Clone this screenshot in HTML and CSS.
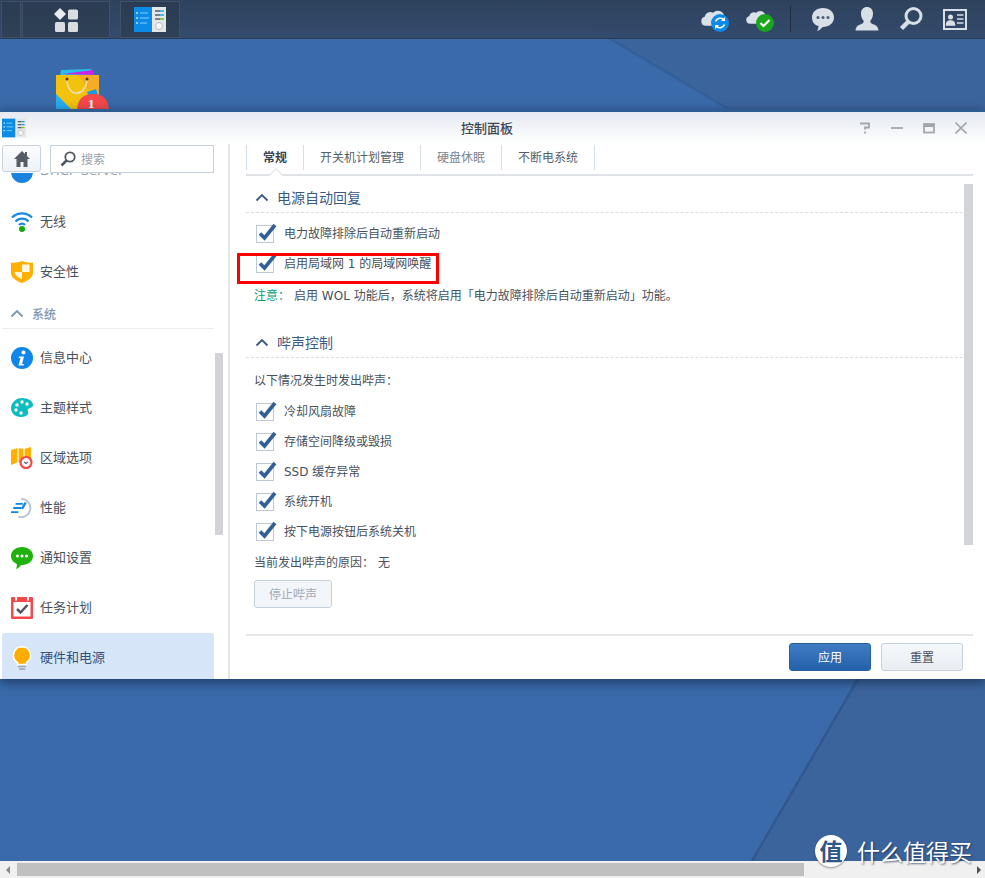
FILE: index.html
```html
<!DOCTYPE html>
<html lang="zh-CN">
<head>
    <meta charset="UTF-8">
    <title>控制面板</title>
    <link rel="stylesheet" href="styles.css">
</head>
<body>
    <svg width="0" height="0" class="defs">
        <symbol id="cp" viewBox="0 0 32 25">
            <rect width="18" height="25" fill="#0b8be6"/>
            <rect x="18" width="14" height="25" fill="#e4e6e8"/>
            <path d="M6 6h8M6 11h9M6 16h7" stroke="#7fd0ff" stroke-width="1.2"/>
            <path d="M2 6h2M2 11h2M2 16h2" stroke="#bfe6ff" stroke-width="1.4"/>
            <path d="M21 4h5M21 8h5M21 12h5" stroke="#555d66" stroke-width="1.5"/>
            <path d="M26 4h4M26 8h4" stroke="#16a5e8" stroke-width="1.5"/>
            <path d="M26 12h4" stroke="#6cbd1a" stroke-width="1.5"/>
            <circle cx="25" cy="19" r="3.5" fill="#f6f8fa" stroke="#b5bcc4"/>
        </symbol>
        <symbol id="chk" viewBox="0 0 22 22">
            <rect x="1.5" y="3.5" width="17" height="17" fill="#fff" stroke="#bcc8d8"/>
            <path d="M5 11.500l4.500 4.500L20 3" fill="none" stroke="#315f98" stroke-width="3.600"/>
        </symbol>
        <symbol id="up" viewBox="0 0 14 9">
            <path d="M1.500 7.500L7 2l5.500 5.500" fill="none" stroke="currentColor" stroke-width="1.800"/>
        </symbol>
        <symbol id="cloud" viewBox="0 0 28 20">
            <path d="M5 20a5 5 0 0 1-1-9.800A6 6 0 0 1 13 6a7 7 0 0 1 12 3.500A5.500 5.500 0 0 1 23 20z" fill="#dbe1e8"/>
        </symbol>
    </svg>

    <svg class="wallpaper" viewBox="0 0 985 861" width="985" height="861">
        <rect width="985" height="861" fill="#3c649c"/>
        <path d="M0 0H545L735 112 860 679 752 861H0z" fill="#3a6aaa"/>
        <path d="M545 0L735 113" stroke="#33609a" stroke-width="2.500" fill="none"/>
        <path d="M858 679L752 861" stroke="#31588e" stroke-width="2.500" fill="none"/>
    </svg>

    <header class="taskbar">
        <div class="task-btn task-stub"></div>
        <div class="task-btn task-apps">
            <svg width="24" height="24" viewBox="0 0 24 24">
                <path d="M6 0l6 6-6 6-6-6z" fill="#e9ebee"/>
                <rect x="14" y="1.500" width="10" height="10" rx="1.500" fill="#d9dde2"/>
                <rect x="1" y="14" width="10" height="10" rx="1.500" fill="#d9dde2"/>
                <rect x="14" y="14" width="10" height="10" rx="1.500" fill="#d9dde2"/>
            </svg>
        </div>
        <div class="task-btn task-cp">
            <svg width="32" height="25"><use href="#cp"/></svg>
        </div>
        <div class="tray">
            <svg class="tray-cloud" width="28" height="26" viewBox="0 0 28 26">
                <use href="#cloud" width="26" height="21" y="0"/>
                <circle cx="19" cy="17" r="9" fill="#0f8ae8"/>
                <path d="M14.500 15.500a5 5 0 0 1 8.500-1.500M23.500 18.500a5 5 0 0 1-8.500 1.500" fill="none" stroke="#fff" stroke-width="1.600"/>
                <path d="M24 11v4h-4zM14 23v-4h4z" fill="#fff"/>
            </svg>
            <svg class="tray-cloud tray-ok" width="28" height="26" viewBox="0 0 28 26">
                <use href="#cloud" width="22" height="18" y="1"/>
                <circle cx="19" cy="17" r="9" fill="#19a51e"/>
                <path d="M14.500 17l3 3 6-6" fill="none" stroke="#fff" stroke-width="2.200"/>
            </svg>
            <div class="tray-sep"></div>
            <svg width="24" height="24" viewBox="0 0 24 24">
                <path d="M12 1c6.500 0 11 4 11 9.500S18 20 12 20l-1 .500c-1 1.500-3 3-5 3.500 1-1.500 1.500-3 1.500-5C3.500 18 1 15 1 10.500 1 5 5.500 1 12 1z" fill="#d9dfe6"/>
                <circle cx="7" cy="10.500" r="1.500" fill="#4a5d75"/><circle cx="12" cy="10.500" r="1.500" fill="#4a5d75"/><circle cx="17" cy="10.500" r="1.500" fill="#4a5d75"/>
            </svg>
            <svg width="24" height="24" viewBox="0 0 24 24">
                <path d="M12 0c3.500 0 6 2.500 6 6.500 0 3-1 5.500-2.500 7-.5 1.500 0 2.500 2 3.500 3 1 5.500 2 6 6.500H.5c.5-4.500 3-5.500 6-6.500 2-1 2.500-2 2-3.500C7 12 6 9.500 6 6.500 6 2.500 8.500 0 12 0z" fill="#d9dfe6"/>
            </svg>
            <svg width="24" height="24" viewBox="0 0 24 24">
                <circle cx="14.500" cy="9" r="7.500" fill="none" stroke="#d9dfe6" stroke-width="3"/>
                <path d="M9 15l-6.500 6.500" stroke="#d9dfe6" stroke-width="4.500"/>
            </svg>
            <svg width="24" height="21" viewBox="0 0 24 21">
                <rect x="1" y="1" width="22" height="19" fill="none" stroke="#d9dfe6" stroke-width="2"/>
                <circle cx="7.500" cy="8" r="2.500" fill="#d9dfe6"/>
                <path d="M3.500 16c0-3 1.500-4 4-4s4 1 4 4zM14 6h6.500M14 10h6.500M14 14h6.500" fill="#d9dfe6" stroke="#d9dfe6" stroke-width="1.500"/>
            </svg>
        </div>
    </header>

    <main class="desktop">
        <svg class="desk-icon" width="54" height="44" viewBox="0 0 54 44">
            <path d="M5 2l30-1 3 8H4z" fill="#29bfe8"/>
            <path d="M7 6l30-4 1 5z" fill="#c923e6"/>
            <rect y="7" width="43" height="37" fill="#f3c20c"/>
            <path d="M22 7h21v30z" fill="#f7ac25"/>
            <path d="M0 26l18 18H0z" fill="#27aef0"/>
            <path d="M11 11c0 19 19 19 20 0" fill="none" stroke="#eedba0" stroke-width="1.800"/>
            <circle cx="11" cy="11" r="1.500" fill="#5a3a10"/><circle cx="31" cy="11" r="1.500" fill="#5a3a10"/>
            <path d="M31 24l9-3 3 9-8 3z" fill="#1d9be6"/>
            <path d="M21 44c0-12 5-18 16-18s16 6 16 18z" fill="#f4484a"/>
        </svg>
        <span class="desk-badge">1</span>

        <section class="window">
            <div class="titlebar">
                <svg class="title-icon" width="24" height="20"><use href="#cp"/></svg>
                <span class="title-text">控制面板</span>
                <div class="title-btns">
                    <svg width="12" height="12" viewBox="0 0 12 12"><path d="M1 1.500h9v4H6v2M6 9.500v2" fill="none" stroke="#a2a7ae" stroke-width="1.800"/></svg>
                    <svg width="12" height="12" viewBox="0 0 12 12"><path d="M0 6h12" stroke="#a2a7ae" stroke-width="1.800"/></svg>
                    <svg width="12" height="12" viewBox="0 0 12 12"><rect x="1" y="2" width="10" height="8.500" fill="none" stroke="#a2a7ae" stroke-width="1.800"/><path d="M1 3.500h10" stroke="#a2a7ae" stroke-width="3"/></svg>
                    <svg width="12" height="12" viewBox="0 0 12 12"><path d="M.5 .5l11 11M11.500 .5l-11 11" stroke="#a2a7ae" stroke-width="1.600"/></svg>
                </div>
            </div>
            <div class="win-body">
                <aside class="sidebar">
                    <div class="side-head">
                        <button class="home-btn">
                            <svg width="16" height="16" viewBox="0 0 16 16">
                                <path d="M8 0L0 8h2.500v8h4v-5h3v5h4V8H16l-3-3V1h-2v2z" fill="#545c66"/>
                            </svg>
                        </button>
                        <div class="search">
                            <svg width="16" height="16" viewBox="0 0 16 16">
                                <circle cx="10" cy="6" r="4.700" fill="none" stroke="#505862" stroke-width="1.800"/>
                                <path d="M6.500 9.500L1.500 14.500" stroke="#505862" stroke-width="2.600"/>
                            </svg>
                            <span>搜索</span>
                        </div>
                    </div>
                    <div class="side-scroll">
                        <div class="side-list">
                            <div class="side-item item-dim">
                                <svg width="22" height="22" viewBox="0 0 22 22"><circle cx="11" cy="11" r="11" fill="#1b82e0"/></svg>
                                <span>DHCP Server</span>
                            </div>
                            <div class="side-item">
                                <svg width="22" height="22" viewBox="0 0 22 22">
                                    <path d="M1 6.500a14 14 0 0 1 20 0M4.500 10.500a9 9 0 0 1 13 0M8 14a4 4 0 0 1 6 0" fill="none" stroke="#1688e6" stroke-width="2.200"/>
                                    <circle cx="11" cy="18" r="3" fill="#17a80f"/>
                                </svg>
                                <span>无线</span>
                            </div>
                            <div class="side-item">
                                <svg width="22" height="22" viewBox="0 0 22 22">
                                    <path d="M0 1.500C4 2 7 1.500 11 0c4 1.500 7 2 11 1.500V12c0 4-5 8-11 10C5 20 0 16 0 12z" fill="#ffb000"/>
                                    <path d="M11 3.500h7.500V11H11zM11 11v7C8 17 4 14.500 3.500 11z" fill="#fdf6e0"/>
                                </svg>
                                <span>安全性</span>
                            </div>
                            <div class="side-group">
                                <svg width="14" height="9"><use href="#up"/></svg>
                                <span>系统</span>
                            </div>
                            <div class="side-item">
                                <svg width="22" height="22" viewBox="0 0 22 22">
                                    <circle cx="11" cy="11" r="11" fill="#0f86e8"/>
                                    <circle cx="12.500" cy="5.500" r="2" fill="#fff"/>
                                    <path d="M8 9.500h5l-2 7.500h2l-.5 1.500H7.500l2-7.500H7.700z" fill="#fff"/>
                                </svg>
                                <span>信息中心</span>
                            </div>
                            <div class="side-item">
                                <svg width="22" height="22" viewBox="0 0 22 22">
                                    <path d="M11 1c6 0 11 3 11 7 0 3-4 3-5 4s1 3 0 5-4 3-7 3C4 20 0 16 0 11S5 1 11 1z" fill="#0bbcc0"/>
                                    <circle cx="6" cy="8" r="1.700" fill="#fff"/><circle cx="11" cy="5" r="1.700" fill="#fff"/><circle cx="5" cy="13" r="1.700" fill="#fff"/><circle cx="16" cy="7" r="1.700" fill="#fff"/><circle cx="10" cy="16" r="1.700" fill="#fff"/>
                                </svg>
                                <span>主题样式</span>
                            </div>
                            <div class="side-item">
                                <svg width="22" height="22" viewBox="0 0 22 22">
                                    <path d="M0 3l7-2 6 1 7-2v14l-7 3-6-2-7 3z" fill="#ffb000"/>
                                    <path d="M7 1v17M13 2v14" stroke="#fff" stroke-width="1.200"/>
                                    <circle cx="15" cy="15.500" r="5.500" fill="#fff" stroke="#f4484a" stroke-width="2.200"/>
                                    <path d="M13 15l2 1.500 2-1.500" fill="none" stroke="#5c6670" stroke-width="1.200"/>
                                </svg>
                                <span>区域选项</span>
                            </div>
                            <div class="side-item">
                                <svg width="24" height="22" viewBox="0 0 24 22">
                                    <path d="M11 1a10 10 0 1 1-3 19.500" fill="none" stroke="#b7c2ce" stroke-width="2"/>
                                    <path d="M5 6.500h8M2.500 11h9M0 15.500h8" stroke="#0f86e8" stroke-width="2"/>
                                    <path d="M12 12l4-7" stroke="#0f86e8" stroke-width="2.400"/>
                                </svg>
                                <span>性能</span>
                            </div>
                            <div class="side-item">
                                <svg width="22" height="22" viewBox="0 0 22 22">
                                    <path d="M11 0c6 0 11 3.500 11 9s-5 9-11 9h-1c-1.500 2-3 3.500-5 4 .7-1.500 1-3 .8-5C2 15.500 0 12.500 0 9 0 3.500 5 0 11 0z" fill="#1fb10c"/>
                                    <circle cx="6.500" cy="9" r="1.500" fill="#fff"/><circle cx="11" cy="9" r="1.500" fill="#fff"/><circle cx="15.500" cy="9" r="1.500" fill="#fff"/>
                                </svg>
                                <span>通知设置</span>
                            </div>
                            <div class="side-item">
                                <svg width="22" height="22" viewBox="0 0 22 22">
                                    <rect width="22" height="22" y="0" rx="1" fill="#f4484a"/>
                                    <rect x="2.500" y="5" width="17" height="14.500" fill="#fff"/>
                                    <path d="M4 0h2v3.500H4zM16 0h2v3.500h-2z" fill="#fff"/>
                                    <path d="M6 12l3.500 3.500L16.500 8" fill="none" stroke="#4f5660" stroke-width="2.500"/>
                                </svg>
                                <span>任务计划</span>
                            </div>
                            <div class="side-item is-active">
                                <svg width="22" height="24" viewBox="0 0 22 24">
                                    <path d="M11 .8a8.500 8.500 0 0 1 4.500 15.700V18.500h-9v-2A8.500 8.500 0 0 1 11 .8z" fill="#ffac00" stroke="#fff" stroke-width="1.500"/>
                                    <path d="M7 20.500h8M8 23h6" stroke="#9aa3ad" stroke-width="1.500"/>
                                </svg>
                                <span>硬件和电源</span>
                            </div>
                        </div>
                        <div class="side-bar"></div>
                    </div>
                </aside>

                <div class="content">
                    <nav class="tabs">
                        <a class="tab is-on">常规</a>
                        <a class="tab">开关机计划管理</a>
                        <a class="tab tab-dim">硬盘休眠</a>
                        <a class="tab">不断电系统</a>
                    </nav>
                    <div class="panel">
                        <div class="panel-bar"></div>
                        <h2 class="sec-head">
                            <svg width="14" height="9"><use href="#up"/></svg>
                            <span>电源自动回复</span>
                        </h2>
                        <div class="sec-first">
                            <label class="check-row">
                                <svg width="22" height="22"><use href="#chk"/></svg>
                                <span>电力故障排除后自动重新启动</span>
                            </label>
                            <label class="check-row">
                                <svg width="22" height="22"><use href="#chk"/></svg>
                                <span>启用局域网 1 的局域网唤醒</span>
                                <div class="mark-box"></div>
                            </label>
                        </div>
                        <p class="note line"><em>注意：</em>启用 WOL 功能后，系统将启用「电力故障排除后自动重新启动」功能。</p>

                        <h2 class="sec-head sec-two">
                            <svg width="14" height="9"><use href="#up"/></svg>
                            <span>哔声控制</span>
                        </h2>
                        <p class="line intro">以下情况发生时发出哔声：</p>
                        <div class="sec-checks">
                            <label class="check-row"><svg width="22" height="22"><use href="#chk"/></svg><span>冷却风扇故障</span></label>
                            <label class="check-row"><svg width="22" height="22"><use href="#chk"/></svg><span>存储空间降级或毁损</span></label>
                            <label class="check-row"><svg width="22" height="22"><use href="#chk"/></svg><span>SSD 缓存异常</span></label>
                            <label class="check-row"><svg width="22" height="22"><use href="#chk"/></svg><span>系统开机</span></label>
                            <label class="check-row"><svg width="22" height="22"><use href="#chk"/></svg><span>按下电源按钮后系统关机</span></label>
                        </div>
                        <p class="line reason">当前发出哔声的原因：<span>无</span></p>
                        <button class="btn btn-off">停止哔声</button>
                    </div>
                    <footer class="actions">
                        <button class="btn btn-main">应用</button>
                        <button class="btn btn-plain">重置</button>
                    </footer>
                </div>
            </div>
        </section>

        <div class="watermark">
            <span class="wm-logo">值</span>
            <span class="wm-text">什么值得买</span>
        </div>
    </main>

    <div class="hscroll">
        <span class="arrow arrow-l"></span>
        <div class="hthumb"></div>
        <span class="arrow arrow-r"></span>
    </div>
</body>
</html>
```

FILE: styles.css
```css
* {
    box-sizing: border-box;
}
html, body {
    margin: 0;
    height: 100%;
    overflow: hidden;
}
body {
    position: relative;
    display: flex;
    flex-direction: column;
    font-family: "DejaVu Sans", "Noto Sans CJK SC", sans-serif;
    font-size: 12px;
    color: #47515c;
    background: #f0f0f0;
}
svg {
    display: block;
    flex: none;
}
.defs {
    position: absolute;
}
.wallpaper {
    position: absolute;
    left: 0;
    top: 0;
}

/* top bar */
.taskbar {
    position: relative;
    display: flex;
    height: 39px;
    padding: 1px 0 1px 1px;
    background: linear-gradient(#2d4058f0, #33496af0);
    border-bottom: 1px solid #283b54;
}
.task-btn {
    display: flex;
    align-items: center;
    justify-content: center;
    height: 37px;
    background: linear-gradient(#2b3c52, #2e4157);
    border: 1px solid #3f5167;
}
.task-stub {
    width: 20px;
    margin-right: 1px;
}
.task-apps {
    width: 88px;
    margin-right: 10px;
}
.task-cp {
    width: 60px;
}
.tray {
    display: flex;
    align-items: center;
    gap: 20px;
    margin-left: auto;
    padding-right: 18px;
}
.tray-cloud {
    margin-right: -3px;
}
.tray-ok {
    margin-right: -4px;
}
.tray-sep {
    width: 1px;
    height: 26px;
    background: #1f2e42;
}

/* desktop */
.desktop {
    position: relative;
    flex: 1;
}
.desk-icon {
    position: absolute;
    left: 56px;
    top: 29px;
}
.desk-badge {
    position: absolute;
    left: 88px;
    top: 57px;
    font: bold 13px "Liberation Serif", serif;
    color: #fff;
}
.window {
    position: absolute;
    left: 0;
    right: 0;
    top: 70px;
    height: 570px;
    display: flex;
    flex-direction: column;
    background: #fff;
    border-top: 3px solid #2e5d94;
    box-shadow: 0 3px 10px rgba(10, 25, 50, 0.6);
}
.titlebar {
    position: relative;
    display: flex;
    align-items: center;
    justify-content: center;
    flex: none;
    height: 32px;
    padding: 0 11px 2px 0;
    background: linear-gradient(#e5e9f1, #fff);
}
.title-icon {
    position: absolute;
    left: 2px;
    top: 6px;
}
.title-text {
    font-size: 13px;
    font-weight: 500;
    color: #3c4754;
}
.title-btns {
    position: absolute;
    right: 18px;
    top: 10px;
    display: flex;
    gap: 20px;
}
.win-body {
    flex: 1;
    display: flex;
    min-height: 0;
}

/* left list */
.sidebar {
    flex: none;
    width: 230px;
    display: flex;
    flex-direction: column;
    border-right: 2px solid #e6e7e9;
}
.side-head {
    position: relative;
    display: flex;
    flex: none;
    gap: 9px;
    height: 28px;
    margin-top: 1px;
    padding-left: 2px;
    background: #fff;
    z-index: 1;
}
.home-btn {
    display: flex;
    align-items: center;
    justify-content: center;
    width: 39px;
    height: 27px;
    padding: 0;
    background: linear-gradient(#fbfcfd, #eef2f7);
    border: 1px solid #c8d2df;
    border-radius: 3px;
}
.search {
    display: flex;
    align-items: center;
    gap: 5px;
    width: 164px;
    height: 28px;
    padding-left: 9px;
    background: #fff;
    border: 1px solid #c5d0de;
    color: #9aa3ad;
}
.search span {
    margin-bottom: 2px;
}
.side-scroll {
    position: relative;
    flex: 1;
    overflow: hidden;
}
.side-list {
    width: 212px;
    margin: -26px 0 0 2px;
}
.side-item {
    display: flex;
    align-items: center;
    height: 50px;
    padding-left: 9px;
    font-size: 13px;
    border-radius: 3px;
}
.side-item svg {
    margin-right: 7px;
    width: 22px;
}
.side-item span {
    margin-bottom: 3px;
}
.item-dim {
    color: #9aa3ad;
}
.is-active {
    background: #d6e6f8;
    color: #33517e;
}
.side-group {
    display: flex;
    align-items: center;
    gap: 8px;
    height: 32px;
    margin-bottom: 4px;
    padding: 2px 0 0 8px;
    font-weight: 500;
    color: #7c96b4;
    border-bottom: 1px solid #ecedef;
}
.side-bar {
    position: absolute;
    left: 215px;
    top: 180px;
    width: 8px;
    height: 182px;
    background: #d3d4d7;
}

/* right side */
.content {
    flex: 1;
    display: flex;
    flex-direction: column;
    min-width: 0;
    padding: 0 12px 0 16px;
}
.tabs {
    position: relative;
    display: flex;
    flex: none;
    height: 32px;
    border-bottom: 2px solid #dfe2e6;
}
.tab {
    display: flex;
    align-items: center;
    height: 23px;
    margin-top: 1px;
    padding: 0 16px 2px;
    color: #555f6a;
    border-right: 1px solid #d5deea;
    box-sizing: content-box;
}
.tabs .tab:first-child {
    border-left: 1px solid #d5deea;
}
.tab-dim {
    color: #7b8590;
}
.is-on {
    position: relative;
    font-weight: 700;
    color: #3a4552;
}
.is-on::after {
    content: "";
    position: absolute;
    left: 24px;
    top: 25px;
    width: 9px;
    height: 9px;
    background: #fff;
    border-left: 1px solid #dfe2e6;
    border-top: 1px solid #dfe2e6;
    transform: rotate(45deg);
}
.panel {
    position: relative;
    flex: 1;
    padding-top: 9px;
}
.panel-bar {
    position: absolute;
    right: 0;
    top: 8px;
    width: 9px;
    height: 361px;
    background: #d3d4d7;
}
.sec-head {
    display: flex;
    align-items: center;
    gap: 8px;
    height: 28px;
    margin: 0;
    padding: 0 0 2px 9px;
    font-size: 14px;
    font-weight: 400;
    color: #3a5a85;
    border-bottom: 1px dashed #d8dfe8;
}
.sec-head span {
    margin-bottom: 2px;
}
.sec-two {
    margin-top: 23px;
}
.sec-first {
    margin-top: 5px;
}
.sec-checks {
    margin-top: 4px;
}
.check-row {
    position: relative;
    display: flex;
    align-items: center;
    gap: 7px;
    height: 30px;
    padding-left: 9px;
}
.check-row span {
    margin-bottom: 1px;
}
.mark-box {
    position: absolute;
    left: -9px;
    top: 5px;
    width: 202px;
    height: 31px;
    border: 3px solid #f00;
}
.line {
    height: 24px;
    margin: 0;
    padding-left: 8px;
    line-height: 26px;
}
.note {
    margin-top: 5px;
}
.note em {
    font-style: normal;
    color: #0a9c70;
    margin-right: 4px;
}
.intro {
    margin-top: 10px;
}
.reason {
    margin-top: 4px;
}
.reason span {
    margin-left: 4px;
}
.btn {
    font: inherit;
    height: 28px;
    padding-bottom: 3px;
    border-radius: 3px;
    border: 1px solid #c6d1de;
}
.btn-off {
    display: block;
    width: 78px;
    margin: 6px 0 0 8px;
    background: #f2f5fa;
    color: #a3abb5;
}
.actions {
    display: flex;
    flex: none;
    justify-content: flex-end;
    gap: 10px;
    height: 45px;
    padding: 7px 10px 0 0;
    border-top: 2px solid #e6e7e9;
}
.btn-main,
.btn-plain {
    width: 82px;
}
.btn-main {
    color: #fff;
    background: linear-gradient(#3f7cc4, #2461aa);
    border-color: #2a5f9f;
}
.btn-plain {
    color: #4a525c;
    background: linear-gradient(#f6f8fa, #e8edf3);
}

/* corner logo */
.watermark {
    position: absolute;
    left: 815px;
    top: 796px;
    display: flex;
    align-items: center;
    gap: 10px;
    z-index: 2;
}
.wm-logo {
    width: 32px;
    height: 32px;
    text-align: center;
    border-radius: 50%;
    background: #fff;
    color: #2f5688;
    font: 700 23px/31px "Noto Sans CJK SC", serif;
    box-shadow: 0 1px 2px rgba(0, 0, 0, 0.4);
}
.wm-text {
    font-family: "Noto Sans CJK SC", sans-serif;
    font-size: 23px;
    line-height: 30px;
    color: #fff;
    text-shadow: 1px 1px 2px rgba(20, 40, 70, 0.7);
}

/* page scrollbar */
.hscroll {
    position: relative;
    display: flex;
    align-items: center;
    flex: none;
    height: 17px;
    background: #f0f0f0;
}
.hthumb {
    position: absolute;
    left: 17px;
    top: 2px;
    width: 787px;
    height: 13px;
    background: #c0c0c0;
}
.arrow {
    position: absolute;
    top: 5px;
    border: 4px solid transparent;
}
.arrow-l {
    left: 2px;
    border-right-color: #8a8a8a;
}
.arrow-r {
    right: 0;
    border-left-color: #505050;
}
```
